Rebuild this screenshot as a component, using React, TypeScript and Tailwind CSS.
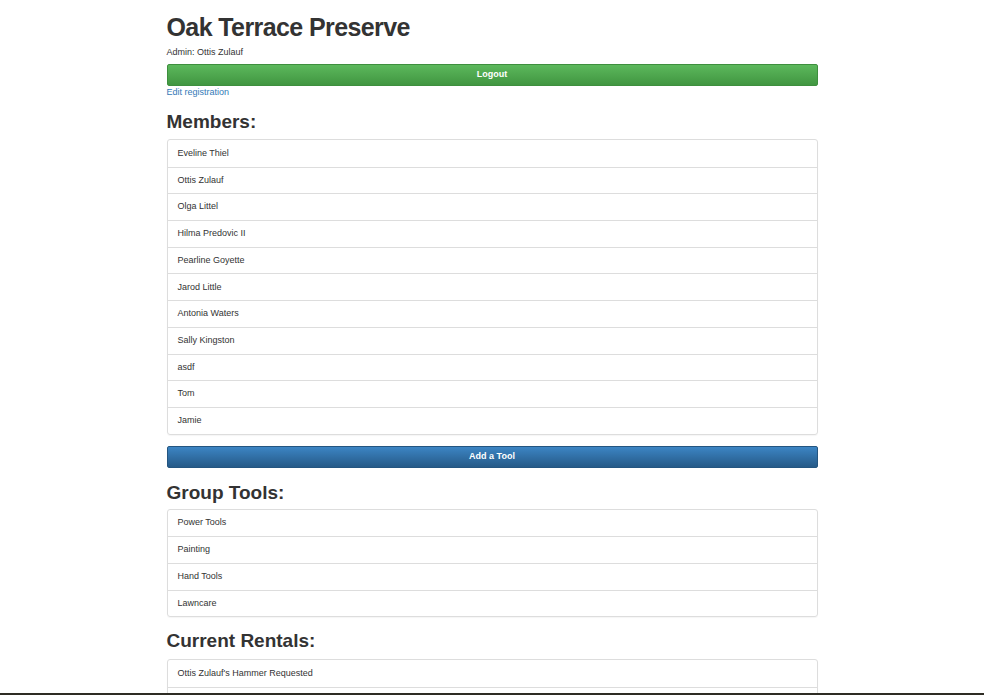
import React from 'react';

const members = [
  "Eveline Thiel",
  "Ottis Zulauf",
  "Olga Littel",
  "Hilma Predovic II",
  "Pearline Goyette",
  "Jarod Little",
  "Antonia Waters",
  "Sally Kingston",
  "asdf",
  "Tom",
  "Jamie",
];

const tools = ["Power Tools", "Painting", "Hand Tools", "Lawncare"];

const rentals = ["Ottis Zulauf's Hammer Requested", ""];

function ListGroup({ items }: { items: string[] }) {
  return (
    <div className="rounded-[3px] border border-[#dddddd] shadow-[0_1px_1px_rgba(0,0,0,0.04)]">
      {items.map((item, i) => (
        <div
          key={i}
          className={`h-[26.7px] flex items-center px-[10px] text-[9px] text-[#333333] ${i > 0 ? "border-t border-[#dddddd]" : ""}`}
        >
          {item}
        </div>
      ))}
    </div>
  );
}

export default function App() {
  return (
    <div className="h-[695px] overflow-hidden flex flex-col bg-white font-['Liberation_Sans',Arial,sans-serif] text-[#333333]">
      <div className="flex-1 overflow-hidden">
        <div className="mx-auto w-[651px]">
          {/* Header */}
          <h1 className="mt-[12px] text-[25px] leading-[30px] font-bold tracking-[-0.6px]">Oak Terrace Preserve</h1>
          <div className="mt-[4px] text-[9px] leading-[13px]">Admin: Ottis Zulauf</div>
          <button className="mt-[5px] w-full h-[22px] rounded-[2px] border border-[#3e8f3e] bg-gradient-to-b from-[#5cb85c] to-[#419641] text-white text-[9px] font-bold">
            Logout
          </button>
          <div className="mt-[1px] text-[9px] leading-[10px] text-[#337ab7]">Edit registration</div>

          {/* Members */}
          <h2 className="mt-[14px] text-[19px] leading-[22px] font-bold">Members:</h2>
          <div className="mt-[6px]">
            <ListGroup items={members} />
          </div>

          <button className="mt-[11px] w-full h-[22px] rounded-[2px] border border-[#245580] bg-gradient-to-b from-[#3c85c4] to-[#265a88] text-white text-[9px] font-bold">
            Add a Tool
          </button>

          {/* Group tools */}
          <h2 className="mt-[14px] text-[19px] leading-[22px] font-bold">Group Tools:</h2>
          <div className="mt-[5px]">
            <ListGroup items={tools} />
          </div>

          {/* Rentals */}
          <h2 className="mt-[13px] text-[19px] leading-[22px] font-bold">Current Rentals:</h2>
          <div className="mt-[7px]">
            <ListGroup items={rentals} />
          </div>
        </div>
      </div>
      <div className="h-[2px] bg-[#2e2c24]" />
    </div>
  );
}
